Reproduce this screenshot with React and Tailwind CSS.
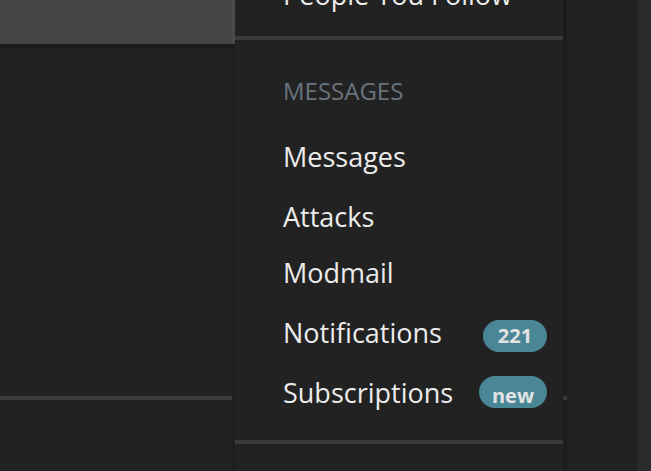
import React from "react";

const items = [
  { label: "Messages", mt: "mt-[40px]" },
  { label: "Attacks", mt: "mt-[32px]" },
  { label: "Modmail", mt: "mt-[28px]" },
  { label: "Notifications", mt: "mt-[32px]", badge: "221" },
  { label: "Subscriptions", mt: "mt-[32px]", badge: "new" },
];

function Badge({ text }) {
  if (text === "new") {
    return (
      <span className="-mt-[3px] flex h-[32px] w-[68px] shrink-0 items-start justify-center rounded-full bg-[#4a8796] pt-[6px] text-[20px] font-bold leading-[28px] text-[#e2e2e2]">
        {text}
      </span>
    );
  }
  return (
    <span className="mt-[1px] flex h-[32px] w-[64px] shrink-0 items-center justify-center rounded-full bg-[#4a8796] text-[20px] font-bold leading-[28px] text-[#e2e2e2]">
      {text}
    </span>
  );
}

export default function App() {
  return (
    <div className="relative flex h-[471px] w-[651px] overflow-hidden bg-[#222222] font-['Open_Sans',sans-serif]">
      {/* page behind the dropdown */}
      <div className="flex flex-1 flex-col">
        <div className="h-[44px] w-[232px] bg-[#454545]" />
        <div className="h-[4px] w-[232px] bg-[#1b1b1b]" />
        <div className="mt-[348px] h-[4px] w-[232px] bg-[#3c3c3c]" />
      </div>
      <div className="w-[13px] bg-[#2b2b2b]" />

      {/* dropdown menu */}
      <div className="absolute left-[232px] top-0 flex h-full">
        <div className="flex w-[3px] flex-col">
          <div className="h-[44px] bg-[#4b4b4b]" />
          <div className="h-[4px] bg-[#1b1b1b]" />
          <div className="flex-1 bg-[#1f1f1f]" />
        </div>
        <div className="flex w-[328px] flex-col bg-[#222222]">
          <div className="h-[36px] overflow-hidden pl-[48px]">
            <div className="-mt-[19px] whitespace-nowrap text-[27px] leading-[28px] text-[#ececec]">People You Follow</div>
          </div>
          <div className="h-[4px] bg-[#3a3a3a]" />
          <div className="flex h-[400px] flex-col pl-[48px] pr-[16px] pt-[38px]">
            <div className="text-[24px] leading-[25px] text-[#68737d]">MESSAGES</div>
            {items.map((it) => (
              <div key={it.label} className={`flex h-[28px] items-start justify-between ${it.mt}`}>
                <span className="whitespace-nowrap text-[27px] leading-[28px] text-[#ececec]">{it.label}</span>
                {it.badge && <Badge text={it.badge} />}
              </div>
            ))}
          </div>
          <div className="h-[4px] bg-[#3a3a3a]" />
        </div>
        <div className="flex w-[4px] flex-col">
          <div className="h-[42px] bg-[#1a1a1a]" />
          <div className="h-[354px] bg-[#1e1e1e]" />
          <div className="h-[4px] bg-[#3a3a3a]" />
          <div className="flex-1 bg-[#1e1e1e]" />
        </div>
      </div>
    </div>
  );
}
